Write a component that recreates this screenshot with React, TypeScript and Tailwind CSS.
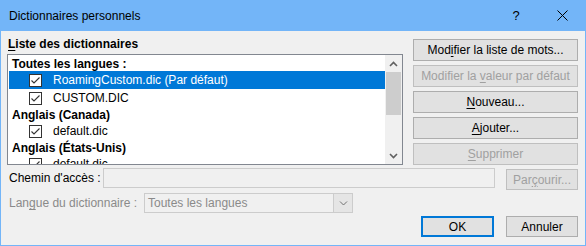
import React from "react";

type Row =
  | { kind: "group"; label: string }
  | { kind: "item"; label: string; selected?: boolean };

const rows: Row[] = [
  { kind: "group", label: "Toutes les langues :" },
  { kind: "item", label: "RoamingCustom.dic (Par défaut)", selected: true },
  { kind: "item", label: "CUSTOM.DIC" },
  { kind: "group", label: "Anglais (Canada)" },
  { kind: "item", label: "default.dic" },
  { kind: "group", label: "Anglais (États-Unis)" },
  { kind: "item", label: "default.dic" },
];

function CheckBox() {
  return (
    <span className="w-[13px] h-[13px] border border-[#333333] bg-white flex items-center justify-center shrink-0">
      <svg width="11" height="11" viewBox="0 0 11 11">
        <path d="M1.5 5.5 L4 8 L9.5 2.5" fill="none" stroke="#333333" strokeWidth="1.1" />
      </svg>
    </span>
  );
}

function Chevron({ up }: { up?: boolean }) {
  return (
    <svg width="9" height="6" viewBox="0 0 9 6">
      <path
        d={up ? "M1 5 L4.5 1.5 L8 5" : "M1 1 L4.5 4.5 L8 1"}
        fill="none"
        stroke="#606060"
        strokeWidth="1.6"
      />
    </svg>
  );
}

function Btn({
  children,
  disabled,
  primary,
  className = "",
}: {
  children: React.ReactNode;
  disabled?: boolean;
  primary?: boolean;
  className?: string;
}) {
  const tone = primary
    ? "border-2 border-[#0078d7] text-black"
    : disabled
    ? "border border-[#bfbfbf] text-[#a0a0a0]"
    : "border border-[#adadad] text-black";
  return (
    <div className={`bg-[#e1e1e1] flex items-center justify-center whitespace-nowrap ${tone} ${className}`}>
      <span>{children}</span>
    </div>
  );
}

export default function App() {
  return (
    <div className="w-[586px] h-[246px] bg-[#f0f0f0] border border-t-0 border-[#73b5f8] flex flex-col text-[12px] leading-[16px] text-black font-['Liberation_Sans',Arial,sans-serif] overflow-hidden">
      {/* Title bar */}
      <div className="h-[31px] bg-[#73b5f8] flex items-center shrink-0">
        <span className="pl-[8px]">Dictionnaires personnels</span>
        <div className="ml-auto flex h-full">
          <div className="w-[46px] flex items-center justify-center text-[13px]">?</div>
          <div className="w-[46px] flex items-center justify-center">
            <svg width="11" height="11" viewBox="0 0 11 11">
              <path d="M0.5 0.5 L10.5 10.5 M10.5 0.5 L0.5 10.5" stroke="#000" strokeWidth="1" />
            </svg>
          </div>
        </div>
      </div>

      {/* Body */}
      <div className="flex-1 flex flex-col pl-[6px] pr-[7px]">
        <div className="flex gap-[10px]">
          {/* Dictionary list */}
          <div className="w-[396px] flex flex-col">
            <div className="mt-[5px] mb-[2px] h-[16px] pl-px font-bold">
              <span className="underline underline-offset-2">L</span>iste des dictionnaires
            </div>
            <div className="h-[111px] border border-[#828790] bg-white flex">
              <div className="flex-1 pt-px overflow-hidden">
                {rows.map((r, i) =>
                  r.kind === "group" ? (
                    <div key={i} className="h-[15px] pl-[4px] flex items-center font-bold">
                      {r.label}
                    </div>
                  ) : (
                    <div
                      key={i}
                      className={`h-[18px] ml-px flex items-center pl-[20px] gap-[11px] whitespace-nowrap ${
                        r.selected ? "bg-[#0078d7] text-white" : ""
                      }`}
                    >
                      <CheckBox />
                      <span>{r.label}</span>
                    </div>
                  )
                )}
              </div>
              {/* Scrollbar */}
              <div className="w-[17px] bg-[#f0f0f0] flex flex-col">
                <div className="h-[17px] flex items-center justify-center">
                  <Chevron up />
                </div>
                <div className="h-[43px] mx-px bg-[#cdcdcd]" />
                <div className="flex-1" />
                <div className="h-[17px] flex items-center justify-center">
                  <Chevron />
                </div>
              </div>
            </div>
          </div>

          {/* Action buttons */}
          <div className="w-[165px] pt-[8px] flex flex-col gap-[4px]">
            <Btn className="h-[22px]">
              Mod<span className="underline underline-offset-2">i</span>fier la liste de mots...
            </Btn>
            <Btn disabled className="h-[22px]">
              Modifier la <span className="underline underline-offset-2">v</span>aleur par défaut
            </Btn>
            <Btn className="h-[22px]">
              <span className="underline underline-offset-2">N</span>ouveau...
            </Btn>
            <Btn className="h-[22px]">
              <span className="underline underline-offset-2">A</span>jouter...
            </Btn>
            <Btn disabled className="h-[22px]">
              <span className="underline underline-offset-2">S</span>upprimer
            </Btn>
          </div>
        </div>

        {/* Path row */}
        <div className="mt-[3px] h-[22px] flex items-start">
          <div className="w-[96px] pl-[2px] h-[20px] flex items-center">Chemin d'accès :</div>
          <div className="w-[392px] h-[20px] border border-[#cccccc] bg-[#f0f0f0]" />
          <Btn disabled className="ml-[11px] mt-px w-[72px] h-[21px]">
            Par<span className="underline underline-offset-2">ç</span>ourir...
          </Btn>
        </div>

        {/* Language row */}
        <div className="mt-[3px] h-[20px] flex items-center">
          <div className="w-[137px] pl-[2px] text-[#8a8a8a]">
            Lan<span className="underline underline-offset-2">g</span>ue du dictionnaire :
          </div>
          <div className="w-[209px] h-[20px] border border-[#cccccc] bg-[#f0f0f0] flex">
            <div className="flex-1 pl-[3px] flex items-center text-[#8a8a8a]">Toutes les langues</div>
            <div className="w-[19px] border-l border-[#cccccc] bg-[#e5e5e5] flex items-center justify-center">
              <svg width="9" height="5" viewBox="0 0 9 5">
                <path d="M1 0.5 L4.5 4 L8 0.5" fill="none" stroke="#707070" strokeWidth="1" />
              </svg>
            </div>
          </div>
        </div>

        {/* Dialog buttons */}
        <div className="mt-[3px] h-[21px] flex justify-end gap-[12px]">
          <Btn primary className="w-[73px] h-[21px]">OK</Btn>
          <Btn className="w-[72px] h-[21px]">Annuler</Btn>
        </div>
      </div>
    </div>
  );
}
